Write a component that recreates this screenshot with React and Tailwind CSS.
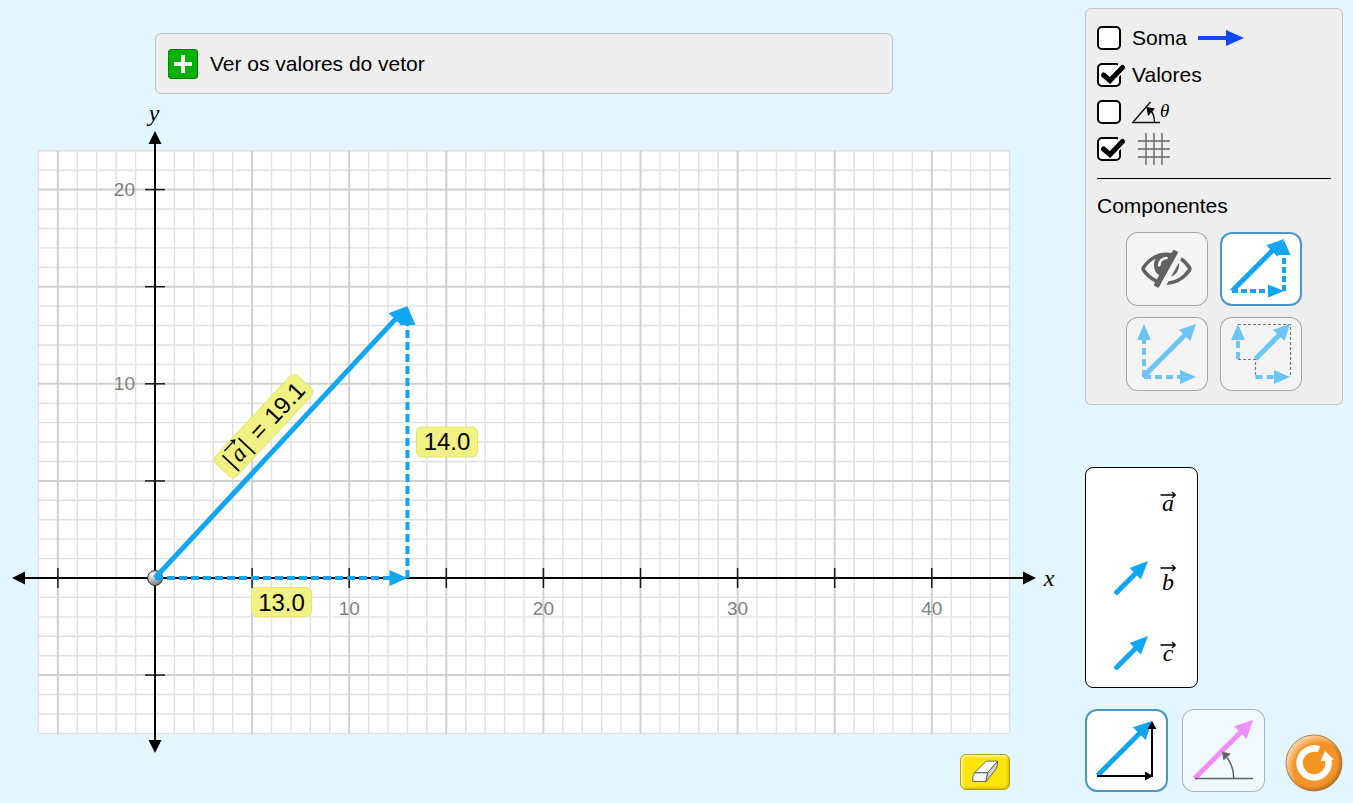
import React, { useState } from 'react';

const BLUE = '#12a5f4';
const LIGHT_BLUE = '#6cc5f6';

// Graph geometry: one grid unit is 19.42px, the origin sits at (155, 578)
const UNIT = 19.42;
const ORIGIN = { x: 155, y: 578 };
const RANGE = { minX: -6, maxX: 44, minY: -8, maxY: 22 };

const toX = (value) => ORIGIN.x + value * UNIT;
const toY = (value) => ORIGIN.y - value * UNIT;

const range = (from, to) => Array.from({ length: to - from + 1 }, (_, i) => from + i);

const Arrow = ({ x1, y1, x2, y2, color = BLUE, width = 5, head = 17, half = 8, dash }) => {
  const length = Math.hypot(x2 - x1, y2 - y1);
  const dx = (x2 - x1) / length;
  const dy = (y2 - y1) / length;
  const baseX = x2 - dx * head;
  const baseY = y2 - dy * head;

  return (
    <g>
      <line
        x1={x1}
        y1={y1}
        x2={baseX + dx}
        y2={baseY + dy}
        stroke={color}
        strokeWidth={width}
        strokeDasharray={dash}
      />
      <polygon
        fill={color}
        points={`${x2},${y2} ${baseX - dy * half},${baseY + dx * half} ${baseX + dy * half},${baseY - dx * half}`}
      />
    </g>
  );
};

const VectorGraph = () => {
  const columns = range(RANGE.minX, RANGE.maxX);
  const rows = range(RANGE.minY, RANGE.maxY);
  const left = toX(RANGE.minX);
  const right = toX(RANGE.maxX);
  const top = toY(RANGE.maxY);
  const bottom = toY(RANGE.minY);
  const tip = { x: toX(13), y: toY(14) };

  return (
    <svg viewBox="0 94 1085 660" className="block w-full h-auto font-['Liberation_Sans',sans-serif]">
      <defs>
        <radialGradient id="origin-ball" cx="0.35" cy="0.3" r="0.8">
          <stop offset="0" stopColor="#ffffff" />
          <stop offset="0.5" stopColor="#b0b0b0" />
          <stop offset="1" stopColor="#6b6b6b" />
        </radialGradient>
      </defs>

      {/* Grid */}
      <rect x={left} y={top} width={right - left} height={bottom - top} fill="#fff" />
      {[false, true].map((major) => (
        <g key={String(major)} stroke={major ? '#d0d0d0' : '#e0e0e0'} strokeWidth={major ? 2 : 1.4}>
          {columns.filter((c) => (c % 5 === 0) === major).map((c) => (
            <line key={`c${c}`} x1={toX(c)} x2={toX(c)} y1={top} y2={bottom} />
          ))}
          {rows.filter((r) => (r % 5 === 0) === major).map((r) => (
            <line key={`r${r}`} x1={left} x2={right} y1={toY(r)} y2={toY(r)} />
          ))}
        </g>
      ))}

      {/* Axes */}
      <g stroke="#000" strokeWidth="2">
        <line x1="22" x2="1026" y1={ORIGIN.y} y2={ORIGIN.y} />
        <line x1={ORIGIN.x} x2={ORIGIN.x} y1="141" y2="744" />
      </g>
      <g fill="#000">
        <polygon points="12,578 25,571.5 25,584.5" />
        <polygon points="1036,578 1023,571.5 1023,584.5" />
        <polygon points="155,131 148.5,144 161.5,144" />
        <polygon points="155,753 148.5,740 161.5,740" />
      </g>
      <g stroke="#1a1a1a" strokeWidth="1.5">
        {columns.filter((c) => c % 5 === 0 && c !== 0).map((c) => (
          <line key={c} x1={toX(c)} x2={toX(c)} y1={ORIGIN.y - 10} y2={ORIGIN.y + 10} />
        ))}
        {rows.filter((r) => r % 5 === 0 && r !== 0).map((r) => (
          <line key={r} x1={ORIGIN.x - 10} x2={ORIGIN.x + 10} y1={toY(r)} y2={toY(r)} />
        ))}
      </g>
      <g fill="#808080" fontSize="19">
        {[10, 20, 30, 40].map((n) => (
          <text key={n} x={toX(n)} y="615" textAnchor="middle">{n}</text>
        ))}
        {[10, 20].map((n) => (
          <text key={n} x="135" y={toY(n) + 6} textAnchor="end">{n}</text>
        ))}
      </g>
      <g className="font-['Liberation_Serif',serif] italic" fontSize="24">
        <text x="154" y="121" textAnchor="middle">y</text>
        <text x="1049" y="586" textAnchor="middle">x</text>
      </g>

      {/* Vector and its components */}
      <circle cx={ORIGIN.x} cy={ORIGIN.y} r="7.5" fill="url(#origin-ball)" stroke="#333" />
      <Arrow x1={ORIGIN.x} y1={ORIGIN.y} x2={tip.x} y2={ORIGIN.y} width={4} head={18} half={8} dash="8 4" />
      <Arrow x1={tip.x} y1={ORIGIN.y} x2={tip.x} y2={tip.y} width={4} head={19} half={8} dash="8 4" />
      <Arrow x1={ORIGIN.x} y1={ORIGIN.y} x2={tip.x} y2={tip.y} width={5} head={18} half={9} />

      {/* Value labels */}
      <g fill="#f1f283" stroke="#e6e66e">
        <rect x="416.5" y="427" width="61" height="30" rx="5" />
        <rect x="251.5" y="587.5" width="60" height="29" rx="5" />
      </g>
      <g fontSize="24" textAnchor="middle">
        <text x="447" y="450">14.0</text>
        <text x="281.5" y="611">13.0</text>
      </g>
      <g transform="translate(263.5 426) rotate(-47)">
        <rect x="-60" y="-14.500" width="120" height="29" rx="6" fill="#f1f283" stroke="#e6e66e" />
        <g stroke="#000" strokeWidth="1.8" fill="none">
          <path d="M-49.5 -10V13" />
          <path d="M-26 -10V13" />
          <path d="M-45 -11.500H-30M-33.500 -14L-30 -11.500L-33.500 -9" strokeWidth="1.3" />
        </g>
        <text x="-37.500" y="8" fontSize="24" textAnchor="middle" className="font-['Liberation_Serif',serif] italic">a</text>
        <text x="-14" y="8" fontSize="24">=</text>
        <text x="8" y="8" fontSize="24">19.1</text>
      </g>
    </svg>
  );
};

const CheckRow = ({ label, defaultChecked, children }) => {
  const [checked, setChecked] = useState(!!defaultChecked);

  return (
    <label className="flex h-[37px] items-center gap-[11px] cursor-pointer">
      <span className="relative h-6 w-6 flex-shrink-0">
        <input
          type="checkbox"
          aria-label={label}
          checked={checked}
          onChange={() => setChecked(!checked)}
          className="block h-6 w-6 appearance-none rounded-[5px] border-2 border-black bg-white"
        />
        {checked && (
          <svg viewBox="0 0 30 26" className="pointer-events-none absolute -top-0.5 left-0 h-[26px] w-[30px]">
            <path d="M21 8V0H30V12H22Z" fill="#eeeeee" />
            <path d="M6.500 14L13 19.500L25.500 7" fill="none" stroke="#fff" strokeWidth="7.500" />
            <path d="M6.500 14L13 19.500L25.500 6.500" fill="none" stroke="#000" strokeWidth="5" strokeLinecap="round" />
          </svg>
        )}
      </span>
      {children}
    </label>
  );
};

const EyeSlashIcon = () => (
  <path
    transform="translate(15.3 9.8) scale(0.0281)"
    fill="#616161"
    d="M555 1335l78-141q-87-63-136-159t-49-203q0-121 61-225-229 117-381 353 167 258 427 375zm389-759q0-20-14-34t-34-14q-125 0-214.5 89.5t-89.5 214.5q0 20 14 34t34 14 34-14 14-34q0-86 61-147t147-61q20 0 34-14t14-34zm363-191q0 7-1 9-105 188-315 566t-316 567l-49 89q-10 16-28 16-12 0-134-70-16-10-16-28 0-12 44-87-143-65-263.5-173t-208.5-245q-20-31-20-69t20-69q153-235 380-371t496-136q89 0 180 17l54-97q10-16 28-16 5 0 18 6t31 15.5 33 18.5 31.5 18.5 19.5 11.5q16 10 16 27zm37 447q0 139-79 253.5t-209 164.5l280-502q8 45 8 84zm448 128q0 35-20 69-39 64-109 145-150 172-347.5 267t-419.5 95l74-132q212-18 392.5-137t301.5-307q-115-179-282-294l63-112q95 64 182.5 153t144.5 184q20 34 20 69z"
  />
);

const componentStyles = [
  { key: 'invisible', label: 'Invisível', icon: <EyeSlashIcon /> },
  {
    key: 'triangle',
    label: 'Triângulo',
    icon: (
      <>
        <Arrow x1={12} y1={59} x2={64} y2={59} width={4} head={16} half={6.5} dash="6 3" />
        <Arrow x1={64} y1={59} x2={64} y2={8} width={4} head={15} half={6.5} dash="6 3" />
        <Arrow x1={12} y1={59} x2={64} y2={7} width={5} head={17} half={8} />
      </>
    ),
  },
  {
    key: 'parallelogram',
    label: 'Paralelogramo',
    icon: (
      <>
        <Arrow x1={18} y1={60} x2={70} y2={60} color={LIGHT_BLUE} width={4} head={16} half={7} dash="7 4" />
        <Arrow x1={18} y1={60} x2={18} y2={7} color={LIGHT_BLUE} width={4} head={16} half={7} dash="7 4" />
        <Arrow x1={17} y1={60} x2={70} y2={7} color={LIGHT_BLUE} width={5} head={16} half={8} />
      </>
    ),
  },
  {
    key: 'projection',
    label: 'Projeção',
    icon: (
      <>
        <path
          d="M18 7.500H70.500V59.500M18 42.500H35.500V59.500"
          fill="none"
          stroke="#777"
          strokeWidth="1.2"
          strokeDasharray="3 2"
        />
        <Arrow x1={35.5} y1={60} x2={70} y2={60} color={LIGHT_BLUE} width={4} head={16} half={7} dash="7 4" />
        <Arrow x1={18} y1={42} x2={18} y2={7} color={LIGHT_BLUE} width={4} head={16} half={7} dash="7 4" />
        <Arrow x1={35.5} y1={42} x2={70} y2={7} color={LIGHT_BLUE} width={5} head={16} half={8} />
      </>
    ),
  },
];

const ControlPanel = () => {
  const [style, setStyle] = useState('triangle');

  return (
    <section className="rounded-md border border-[#bfc2c6] bg-[#eeeeee] px-[11px] pt-[10px] pb-[13px]">
      <CheckRow label="Soma">
        <span>Soma</span>
        <svg viewBox="0 0 46 16" className="h-4 w-[46px]">
          <Arrow x1={0} y1={8} x2={46} y2={8} color="#1048f5" width={4} head={18} half={8} />
        </svg>
      </CheckRow>
      <CheckRow label="Valores" defaultChecked>
        <span>Valores</span>
      </CheckRow>
      <CheckRow label="Ângulo">
        <span className="flex items-center">
          <svg viewBox="0 0 28 24" className="h-6 w-7">
            <path d="M18.500 2L0.700 22.500H28M22.500 22.500Q22.500 14 18 9.500" fill="none" stroke="#111" strokeWidth="1.4" />
            <polygon points="14.500,7 23,8.500 16,16" fill="#000" />
          </svg>
          <span className="font-['Liberation_Serif',serif] text-[19px] italic">θ</span>
        </span>
      </CheckRow>
      <CheckRow label="Grade" defaultChecked>
        <svg viewBox="0 0 32 32" className="ml-1.5 h-8 w-8">
          <path d="M8 0V32M16 0V32M24 0V32M0 8H32M0 16H32M0 24H32" stroke="#666" strokeWidth="1.4" />
        </svg>
      </CheckRow>

      <hr className="mt-[11px] border-t border-black" />

      <h2 className="mt-[11px] leading-8">Componentes</h2>
      <div className="mt-[10px] flex flex-wrap justify-center gap-3 gap-y-[11px]">
        {componentStyles.map((item) => (
          <button
            key={item.key}
            aria-label={item.label}
            onClick={() => setStyle(item.key)}
            className={`h-[74px] w-[82px] rounded-xl ring-inset ${
              style === item.key ? 'bg-white ring-2 ring-[#4a96c8]' : 'bg-[#f4f4f4] ring-1 ring-[#a4a4a4]'
            }`}
          >
            <svg viewBox="0 0 82 74" className="h-full w-full">{item.icon}</svg>
          </button>
        ))}
      </div>
    </section>
  );
};

const VectorSymbol = ({ letter }) => (
  <span
    className={`flex w-4 flex-col items-center font-['Liberation_Serif',serif] text-2xl italic ${
      letter === 'b' ? 'leading-5' : 'pb-2 leading-2'
    }`}
  >
    <svg viewBox="0 0 16 8" className="h-2 w-4">
      <path d="M0.500 4H15M12 1L15.200 4L12 7" fill="none" stroke="#000" strokeWidth="1.3" />
    </svg>
    <span>{letter}</span>
  </span>
);

// Vector "a" is already on the graph, so its slot keeps only the symbol
const VectorToolbox = () => (
  <section className="mt-[62px] grid h-[221px] w-[113px] auto-rows-[75px] content-center rounded-lg border border-black bg-white">
    {['a', 'b', 'c'].map((letter) => (
      <button key={letter} className="flex items-center justify-end gap-3 pr-[21px]">
        {letter !== 'a' && (
          <svg viewBox="0 0 34 34" className="h-[34px] w-[34px]">
            <Arrow x1={1} y1={33} x2={34} y2={0} head={18} half={8} />
          </svg>
        )}
        <VectorSymbol letter={letter} />
      </button>
    ))}
  </section>
);

const BottomControls = () => (
  <div className="mt-[21px] flex items-end">
    <button aria-label="Coordenadas cartesianas" className="h-[83px] w-[83px] rounded-xl bg-white ring-2 ring-inset ring-[#4a96c8]">
      <svg viewBox="0 0 83 83" className="h-full w-full">
        <Arrow x1={12.5} y1={66.5} x2={67} y2={12} width={5} head={18} half={9} />
        <Arrow x1={12} y1={67} x2={68} y2={67} color="#000" width={2} head={8} half={4.5} />
        <Arrow x1={67} y1={68} x2={67} y2={12} color="#000" width={2} head={8} half={4.5} />
      </svg>
    </button>
    <button aria-label="Coordenadas polares" className="ml-[14px] h-[83px] w-[83px] rounded-xl bg-[#f0f9fe] ring-1 ring-inset ring-[#a9b4ba]">
      <svg viewBox="0 0 83 83" className="h-full w-full">
        <Arrow x1={12.5} y1={69.5} x2={71} y2={11} color="#ee90fb" width={5} head={18} half={9} />
        <path d="M13 69.500H71M51.700 69.500Q51.500 57 45 48.500" fill="none" stroke="#5f6368" strokeWidth="1.500" />
        <polygon points="40,42.5 48.700,44.700 41.500,51.500" fill="#5f6368" />
      </svg>
    </button>
    <button aria-label="Reiniciar" className="ml-auto h-[58px] w-[58px] rounded-full">
      <svg viewBox="0 0 58 58" className="h-full w-full">
        <defs>
          <radialGradient id="reset-fill" cx="0.47" cy="0.47" r="0.56">
            <stop offset="0" stopColor="#f7931e" />
            <stop offset="0.8" stopColor="#f3942a" />
            <stop offset="1" stopColor="#a86414" />
          </radialGradient>
          <radialGradient id="reset-shine" cx="0.6" cy="0.6" r="0.62">
            <stop offset="0.75" stopColor="#fff" stopOpacity="0" />
            <stop offset="1" stopColor="#fff" stopOpacity="0.6" />
          </radialGradient>
        </defs>
        <circle cx="29" cy="29" r="28" fill="url(#reset-fill)" stroke="#9a6a30" strokeWidth="0.8" />
        <circle cx="29" cy="29" r="27.500" fill="url(#reset-shine)" />
        <path d="M34 15.300A14.500 14.500 0 1 0 43.300 26" fill="none" stroke="#fff" strokeWidth="6.500" />
        <polygon points="40,17 48.800,25.600 35.500,27.500" fill="#fff" />
      </svg>
    </button>
  </div>
);

const App = () => {
  return (
    <div className="flex min-h-screen bg-[#e3f6ff] pr-[10px] font-['Liberation_Sans',Arial,sans-serif] text-[21px] text-black">
      {/* Graph side */}
      <main className="min-w-0 flex-1">
        <header className="mt-[33px] mr-[192px] ml-[155px] flex h-[61px] items-center gap-3 rounded-md border border-[#bfc2c6] bg-[#eeeeee] px-3">
          <button aria-label="Abrir" className="h-[30px] w-[30px] rounded-[3px] border border-[#0a7a0a] bg-[#06b106]">
            <svg viewBox="0 0 28 28" className="h-full w-full">
              <path d="M14 5V23M5 14H23" stroke="#fff" strokeWidth="4" />
            </svg>
          </button>
          <span>Ver os valores do vetor</span>
        </header>
        <VectorGraph />
        <div className="mr-[75px] flex justify-end">
          <button
            aria-label="Apagar"
            className="h-[36px] w-[50px] rounded-[6px] border border-[#b5a21c] bg-[#fde408] shadow-[inset_2px_2px_2px_#fff48a,inset_-1px_-1px_2px_#c9b406]"
          >
            <svg viewBox="0 0 48 35" className="h-full w-full">
              <g stroke="#555" strokeWidth="0.900" strokeLinejoin="round">
                <path d="M13.300 18.300L25.300 6.300H37L26.700 18.300Z" fill="#fff" />
                <path d="M13.300 18.300H26.700L25 27.300H11.300Q11 21 13.300 18.300Z" fill="#f6f6f6" />
                <path d="M26.700 18.300L37 6.300Q37 11 35.700 14L25 27.300Z" fill="#d0d0d0" />
              </g>
            </svg>
          </button>
        </div>
      </main>

      {/* Controls side */}
      <aside className="w-[258px] flex-shrink-0 pt-2 pb-[11px]">
        <ControlPanel />
        <VectorToolbox />
        <BottomControls />
      </aside>
    </div>
  );
};

export default App;
